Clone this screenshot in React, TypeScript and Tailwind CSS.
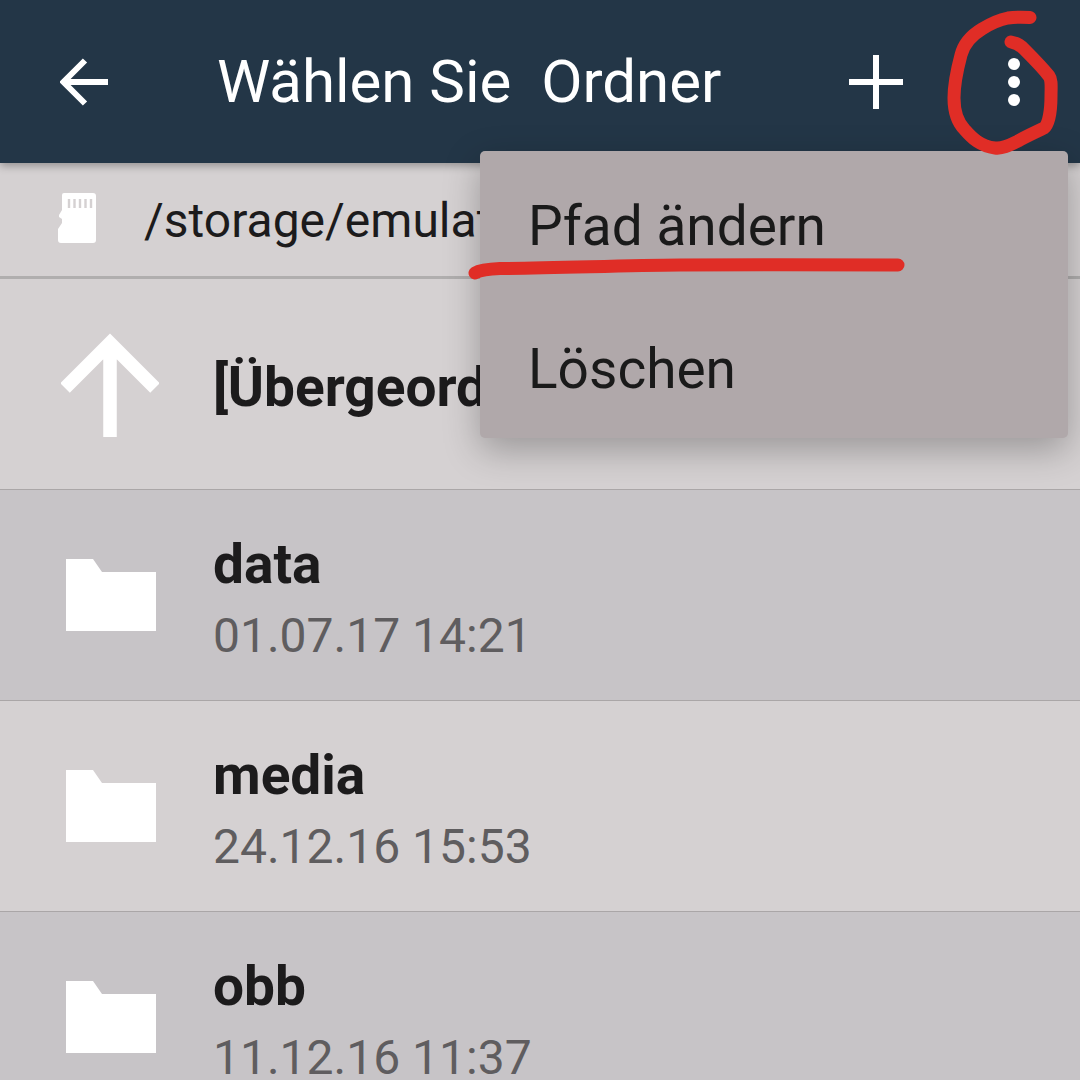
const ROWS = [
  { name: "data", date: "01.07.17 14:21", bg: "bg-[#c7c4c7]" },
  { name: "media", date: "24.12.16 15:53", bg: "bg-[#d5d1d2]" },
  { name: "obb", date: "11.12.16 11:37", bg: "bg-[#c7c4c7]" },
];

function FolderIcon() {
  return (
    <svg viewBox="0 0 90 72" className="h-[72px] w-[90px] shrink-0" fill="#fff">
      <path d="M0 0H27L36 13H90V72H0Z" />
    </svg>
  );
}

function SdCardIcon() {
  return (
    <svg viewBox="0 0 40 52" className="h-[52px] w-[40px] shrink-0">
      <path
        fill="#fff"
        d="M7 1H36Q39 1 39 4V48Q39 51 36 51H4Q1 51 1 48V37L5 31V27L2 25V23L5 18V3Q5 1 7 1Z"
      />
      <path
        stroke="#d5d1d2"
        strokeWidth="2.4"
        d="M12 7V16M17.5 7V16M23 7V16M28.5 7V16M34 7V16"
      />
    </svg>
  );
}

export default function App() {
  return (
    <div className="relative h-[1080px] w-[1080px] overflow-hidden bg-[#d5d1d2] font-['Roboto',sans-serif] text-[#1c1b1c]">
      <header className="relative z-10 flex h-[163px] items-center bg-[#233647] text-white shadow-[0_3px_8px_rgba(0,0,0,0.3)]">
        <svg viewBox="0 0 48 48" className="ml-[60px] size-[48px] shrink-0" fill="none" stroke="#fff" strokeWidth="6">
          <path d="M48 24H5M25 2.500L3.500 24L25 45.500" />
        </svg>
        <h1 className="ml-[109px] whitespace-pre text-[60px] leading-none">Wählen Sie  Ordner</h1>
        <svg viewBox="0 0 54 54" className="ml-[128px] size-[54px] shrink-0" fill="#fff">
          <path d="M24 0H30V24H54V30H30V54H24V30H0V24H24Z" />
        </svg>
        <div className="ml-[105px] flex flex-col gap-[6px]">
          <span className="size-3 rounded-full bg-white" />
          <span className="size-3 rounded-full bg-white" />
          <span className="size-3 rounded-full bg-white" />
        </div>
      </header>

      <div className="flex h-[116px] items-center border-b-[3px] border-[#b0aeae] pb-[3px] pl-[57px]">
        <SdCardIcon />
        <span className="ml-[47px] mt-[6px] whitespace-nowrap text-[48px] leading-none">/storage/emulated/0</span>
      </div>

      <div className="flex h-[211px] items-center border-b border-[#aaa6a7] pl-[61px]">
        <svg viewBox="0 0 98 104" className="mt-[2px] h-[104px] w-[98px] shrink-0" fill="none" stroke="#fff" strokeWidth="13.500">
          <path d="M49 104V8M4 55L49 10L94 55" />
        </svg>
        <span className="ml-[54px] mt-[6px] whitespace-nowrap text-[55px] font-bold leading-none">[Übergeordnet]</span>
      </div>

      {ROWS.map((row) => (
        <div key={row.name} className={`flex h-[211px] items-center border-b border-[#aaa6a7] pl-[66px] ${row.bg}`}>
          <FolderIcon />
          <div className="ml-[57px] mt-[10px] flex flex-col gap-[16px]">
            <span className="text-[55px] font-bold leading-[56px]">{row.name}</span>
            <span className="text-[48px] leading-[56px] text-[#5f5d5f]">{row.date}</span>
          </div>
        </div>
      ))}

      <div className="absolute left-[480px] top-[151px] z-20 flex h-[287px] w-[588px] flex-col rounded-[5px] bg-[#b0a8aa] pl-[48px] pt-[5px] text-[55px] leading-none text-[#1a1a1a] shadow-[0_12px_36px_rgba(0,0,0,0.28)]">
        <div className="flex h-[144px] items-center">Pfad ändern</div>
        <div className="flex h-[144px] items-center pt-[4px]">Löschen</div>
      </div>

      <svg viewBox="0 0 1080 1080" className="pointer-events-none absolute inset-0 z-30 size-[1080px]" fill="none" stroke="#e02d26" strokeLinecap="round" strokeLinejoin="round">
        <path
          strokeWidth="13"
          d="M1030 17.5C1022 17 1015 17 1008 18C998 20 990 24 982 29C972 35 964 43 961 55C957 70 954 84 954 98C954 112 957 122 965 130C972 138 980 146 995 148C1003 149 1010 145 1018 141C1027 136 1036 132 1044 128C1049 124 1051 110 1051 96C1051 88 1052 80 1049 76C1042 67 1032 57 1024 49C1020 45 1016 43 1011 42"
        />
        <path strokeWidth="13" d="M475 273C480 270 488 269 500 268.500C560 268 620 265.500 680 265C750 264.500 830 265 898 265" />
      </svg>
    </div>
  );
}
